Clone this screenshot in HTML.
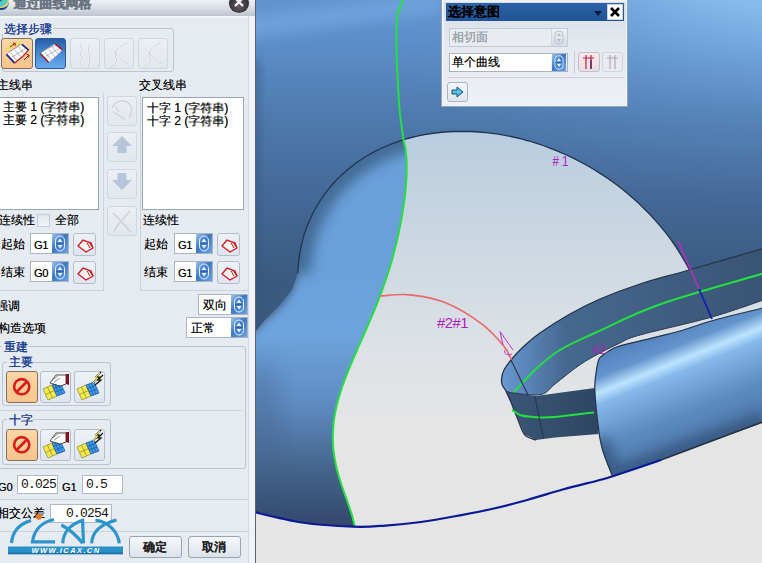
<!DOCTYPE html>
<html><head><meta charset="utf-8">
<style>
*{margin:0;padding:0;box-sizing:border-box}
html,body{width:762px;height:563px;overflow:hidden;background:#e2e4e6;font-family:"Liberation Sans",sans-serif;font-size:12px;color:#000}
#vp{position:absolute;left:0;top:0;width:762px;height:563px}
.a{position:absolute}
</style></head><body>
<svg id="vp" width="762" height="563" viewBox="0 0 762 563">
<defs>
<filter id="b4" x="-50%" y="-50%" width="200%" height="200%"><feGaussianBlur stdDeviation="4"/></filter>
<filter id="b6" x="-50%" y="-50%" width="200%" height="200%"><feGaussianBlur stdDeviation="6"/></filter>
<filter id="b12" x="-50%" y="-50%" width="200%" height="200%"><feGaussianBlur stdDeviation="12"/></filter>
<filter id="b20" x="-50%" y="-50%" width="200%" height="200%"><feGaussianBlur stdDeviation="20"/></filter>
<clipPath id="cTop"><path d="M255 -1 L765 -1 L765 248 L689 270 L689.5 270.0 L685.3 262.2 L680.8 254.6 L676.2 247.3 L671.3 240.2 L666.2 233.4 L660.9 226.9 L655.5 220.6 L650.0 214.5 L644.2 208.7 L638.4 203.1 L632.5 197.7 L626.4 192.5 L620.2 187.6 L613.9 182.8 L607.5 178.3 L600.9 173.9 L594.3 169.7 L587.5 165.8 L580.6 162.0 L573.7 158.4 L566.5 155.0 L559.3 151.8 L551.9 148.8 L544.4 146.0 L536.8 143.4 L529.1 141.0 L521.2 138.9 L513.1 137.0 L505.0 135.3 L496.6 133.9 L488.2 132.8 L479.6 132.0 L470.9 131.5 L462.1 131.3 L453.2 131.5 L444.2 132.0 L435.1 133.0 L426.0 134.4 L416.9 136.2 L407.7 138.5 L398.7 141.3 L389.7 144.7 L380.8 148.5 L372.2 152.9 L363.8 157.8 L355.7 163.3 L347.9 169.4 L340.5 175.9 L333.6 183.0 L327.2 190.6 L321.4 198.6 L316.2 207.0 L311.6 215.8 L307.6 224.9 L304.3 234.2 L301.7 243.7 L299.8 253.4 L298.5 263.1 L297.8 272.9 L292.0 290.0 L280.0 305.0 L265.0 320.0 L255.0 332.0 Z"/></clipPath>
<clipPath id="cLow"><path d="M255 332 L255.0 332.0 L265.0 320.0 L280.0 305.0 L292.0 290.0 L297.0 272.0 L297.8 272.9 L298.5 263.1 L299.8 253.4 L301.7 243.7 L304.3 234.2 L307.6 224.9 L311.6 215.8 L316.2 207.0 L321.4 198.6 L327.2 190.6 L333.6 183.0 L340.5 175.9 L347.9 169.4 L355.7 163.3 L363.8 157.8 L372.2 152.9 L380.8 148.5 L389.7 144.7 L398.7 141.3 L403.3 138.5 C403.7 140.2 404.9 145.1 405.4 148.5 C405.9 151.8 406.2 155.1 406.4 158.4 C406.7 161.7 406.7 165.1 406.7 168.4 C406.7 171.7 406.6 175.0 406.4 178.3 C406.2 181.7 406.0 185.0 405.7 188.3 C405.4 191.6 405.0 194.9 404.6 198.3 C404.2 201.6 403.7 204.9 403.2 208.2 C402.7 211.6 402.1 214.9 401.5 218.2 C400.9 221.5 400.3 224.8 399.6 228.2 C399.0 231.5 398.3 234.8 397.5 238.1 C396.8 241.4 396.0 244.8 395.1 248.1 C394.3 251.4 393.4 254.7 392.5 258.0 C391.6 261.4 390.6 264.7 389.6 268.0 C388.6 271.3 387.5 274.6 386.4 278.0 C385.3 281.3 384.1 284.6 382.9 287.9 C381.8 291.2 380.5 294.6 379.2 297.9 C378.0 301.2 376.6 304.5 375.3 307.8 C373.9 311.2 372.6 314.5 371.1 317.8 C369.7 321.1 368.3 324.4 366.8 327.8 C365.4 331.1 363.9 334.4 362.5 337.7 C361.0 341.1 359.5 344.4 358.0 347.7 C356.6 351.0 355.1 354.3 353.7 357.7 C352.3 361.0 350.8 364.3 349.5 367.6 C348.1 370.9 346.8 374.3 345.5 377.6 C344.3 380.9 343.1 384.2 341.9 387.5 C340.8 390.9 339.8 394.2 338.8 397.5 C337.9 400.8 337.0 404.1 336.2 407.5 C335.5 410.8 334.9 414.1 334.3 417.4 C333.8 420.7 333.4 424.1 333.2 427.4 C332.9 430.7 332.8 434.0 332.8 437.3 C332.8 440.7 332.9 444.0 333.2 447.3 C333.5 450.6 333.9 453.9 334.4 457.3 C335.0 460.6 335.6 463.9 336.4 467.2 C337.2 470.6 338.1 473.9 339.1 477.2 C340.1 480.5 341.2 483.8 342.3 487.2 C343.4 490.5 344.6 493.8 345.8 497.1 C347.0 500.4 348.2 503.8 349.3 507.1 C350.4 510.4 351.6 513.7 352.5 517.0 C353.4 520.4 354.3 525.3 354.7 527.0 L353.5 526.7 C344.9 526.0 318.9 525.1 301.7 522.5 C284.4 519.9 258.6 512.9 250.0 511.0 Z"/></clipPath>
<linearGradient id="gHole" x1="0" y1="130" x2="0" y2="430" gradientUnits="userSpaceOnUse">
<stop offset="0" stop-color="#b8cde0"/><stop offset="0.4" stop-color="#cdd8e2"/><stop offset="0.75" stop-color="#dee2e6"/><stop offset="1" stop-color="#e5e5e6"/>
</linearGradient>
<linearGradient id="gTop" x1="0" y1="0" x2="0" y2="280" gradientUnits="userSpaceOnUse">
<stop offset="0" stop-color="#6094ce"/><stop offset="0.15" stop-color="#5c8ec8"/><stop offset="0.45" stop-color="#4c78aa"/><stop offset="0.75" stop-color="#436694"/><stop offset="1" stop-color="#3a5a80"/>
</linearGradient>
<radialGradient id="gTR" cx="800" cy="-120" r="330" gradientTransform="translate(800 -120) scale(1.5 1) translate(-800 120)" gradientUnits="userSpaceOnUse">
<stop offset="0" stop-color="#b0dcff" stop-opacity="1"/><stop offset="0.4" stop-color="#8cc0f0" stop-opacity="0.85"/><stop offset="0.72" stop-color="#6a9ed6" stop-opacity="0.3"/><stop offset="1" stop-color="#5c8cc4" stop-opacity="0"/>
</radialGradient>
<linearGradient id="gLow" x1="0" y1="250" x2="0" y2="528" gradientUnits="userSpaceOnUse">
<stop offset="0" stop-color="#6a9fd8"/><stop offset="0.3" stop-color="#6ea4dc"/><stop offset="0.55" stop-color="#5e8cc2"/><stop offset="0.8" stop-color="#44628a"/><stop offset="1" stop-color="#33476a"/>
</linearGradient>
<linearGradient id="gRib" x1="500" y1="0" x2="762" y2="0" gradientUnits="userSpaceOnUse">
<stop offset="0" stop-color="#6a9ad0"/><stop offset="0.1" stop-color="#5a86ba"/><stop offset="0.25" stop-color="#46688f"/><stop offset="1" stop-color="#3a5474"/>
</linearGradient>
<linearGradient id="gFront" x1="511" y1="0" x2="597" y2="0" gradientUnits="userSpaceOnUse">
<stop offset="0" stop-color="#3a5676"/><stop offset="1" stop-color="#2e4662"/>
</linearGradient>
<linearGradient id="gShape" x1="665" y1="323" x2="721" y2="463" gradientUnits="userSpaceOnUse">
<stop offset="0" stop-color="#4e7eb8"/><stop offset="0.17" stop-color="#6494cc"/><stop offset="0.267" stop-color="#bce4ff"/><stop offset="0.34" stop-color="#86b8ea"/><stop offset="0.6" stop-color="#5c8cc0"/><stop offset="1" stop-color="#42689a"/>
</linearGradient>
</defs>
<rect x="255" y="0" width="507" height="563" fill="url(#gHole)"/>
<path d="M255 332 L255.0 332.0 L265.0 320.0 L280.0 305.0 L292.0 290.0 L297.0 272.0 L297.8 272.9 L298.5 263.1 L299.8 253.4 L301.7 243.7 L304.3 234.2 L307.6 224.9 L311.6 215.8 L316.2 207.0 L321.4 198.6 L327.2 190.6 L333.6 183.0 L340.5 175.9 L347.9 169.4 L355.7 163.3 L363.8 157.8 L372.2 152.9 L380.8 148.5 L389.7 144.7 L398.7 141.3 L403.3 138.5 C403.7 140.2 404.9 145.1 405.4 148.5 C405.9 151.8 406.2 155.1 406.4 158.4 C406.7 161.7 406.7 165.1 406.7 168.4 C406.7 171.7 406.6 175.0 406.4 178.3 C406.2 181.7 406.0 185.0 405.7 188.3 C405.4 191.6 405.0 194.9 404.6 198.3 C404.2 201.6 403.7 204.9 403.2 208.2 C402.7 211.6 402.1 214.9 401.5 218.2 C400.9 221.5 400.3 224.8 399.6 228.2 C399.0 231.5 398.3 234.8 397.5 238.1 C396.8 241.4 396.0 244.8 395.1 248.1 C394.3 251.4 393.4 254.7 392.5 258.0 C391.6 261.4 390.6 264.7 389.6 268.0 C388.6 271.3 387.5 274.6 386.4 278.0 C385.3 281.3 384.1 284.6 382.9 287.9 C381.8 291.2 380.5 294.6 379.2 297.9 C378.0 301.2 376.6 304.5 375.3 307.8 C373.9 311.2 372.6 314.5 371.1 317.8 C369.7 321.1 368.3 324.4 366.8 327.8 C365.4 331.1 363.9 334.4 362.5 337.7 C361.0 341.1 359.5 344.4 358.0 347.7 C356.6 351.0 355.1 354.3 353.7 357.7 C352.3 361.0 350.8 364.3 349.5 367.6 C348.1 370.9 346.8 374.3 345.5 377.6 C344.3 380.9 343.1 384.2 341.9 387.5 C340.8 390.9 339.8 394.2 338.8 397.5 C337.9 400.8 337.0 404.1 336.2 407.5 C335.5 410.8 334.9 414.1 334.3 417.4 C333.8 420.7 333.4 424.1 333.2 427.4 C332.9 430.7 332.8 434.0 332.8 437.3 C332.8 440.7 332.9 444.0 333.2 447.3 C333.5 450.6 333.9 453.9 334.4 457.3 C335.0 460.6 335.6 463.9 336.4 467.2 C337.2 470.6 338.1 473.9 339.1 477.2 C340.1 480.5 341.2 483.8 342.3 487.2 C343.4 490.5 344.6 493.8 345.8 497.1 C347.0 500.4 348.2 503.8 349.3 507.1 C350.4 510.4 351.6 513.7 352.5 517.0 C353.4 520.4 354.3 525.3 354.7 527.0 L353.5 526.7 C344.9 526.0 318.9 525.1 301.7 522.5 C284.4 519.9 258.6 512.9 250.0 511.0 Z" fill="url(#gLow)"/>
<g clip-path="url(#cLow)">
<path d="M297.8 272.9 L298.5 263.1 L299.8 253.4 L301.7 243.7 L304.3 234.2 L307.6 224.9 L311.6 215.8 L316.2 207.0 L321.4 198.6 L327.2 190.6 L333.6 183.0 L340.5 175.9 L347.9 169.4 L355.7 163.3 L363.8 157.8 L372.2 152.9 L380.8 148.5 L389.7 144.7 L398.7 141.3 L407.7 138.5 L416.9 136.2 L426.0 134.4 L435.1 133.0 L444.2 132.0 L453.2 131.5 L462.1 131.3 L470.9 131.5 L479.6 132.0 L488.2 132.8 L496.6 133.9 L505.0 135.3 L513.1 137.0 L521.2 138.9 L529.1 141.0 L536.8 143.4 L544.4 146.0 L551.9 148.8 L559.3 151.8 L566.5 155.0 L573.7 158.4 L580.6 162.0 L587.5 165.8 L594.3 169.7 L600.9 173.9 L607.5 178.3 L613.9 182.8 L620.2 187.6 L626.4 192.5 L632.5 197.7 L638.4 203.1 L644.2 208.7 L650.0 214.5 L655.5 220.6 L660.9 226.9 L666.2 233.4 L671.3 240.2 L676.2 247.3 L680.8 254.6 L685.3 262.2 L689.5 270.0" fill="none" stroke="#36587f" stroke-width="26" opacity="0.7" filter="url(#b6)"/>
<ellipse cx="262" cy="420" rx="16" ry="60" fill="#44648c" opacity="0.45" filter="url(#b12)"/>
</g>
<path d="M250 140 L297 272 C296 292 282 306 268 318 C262 323 256 330 250 336 Z" fill="#3c5c84" filter="url(#b4)"/>
<path d="M255 -1 L765 -1 L765 248 L689 270 L689.5 270.0 L685.3 262.2 L680.8 254.6 L676.2 247.3 L671.3 240.2 L666.2 233.4 L660.9 226.9 L655.5 220.6 L650.0 214.5 L644.2 208.7 L638.4 203.1 L632.5 197.7 L626.4 192.5 L620.2 187.6 L613.9 182.8 L607.5 178.3 L600.9 173.9 L594.3 169.7 L587.5 165.8 L580.6 162.0 L573.7 158.4 L566.5 155.0 L559.3 151.8 L551.9 148.8 L544.4 146.0 L536.8 143.4 L529.1 141.0 L521.2 138.9 L513.1 137.0 L505.0 135.3 L496.6 133.9 L488.2 132.8 L479.6 132.0 L470.9 131.5 L462.1 131.3 L453.2 131.5 L444.2 132.0 L435.1 133.0 L426.0 134.4 L416.9 136.2 L407.7 138.5 L398.7 141.3 L389.7 144.7 L380.8 148.5 L372.2 152.9 L363.8 157.8 L355.7 163.3 L347.9 169.4 L340.5 175.9 L333.6 183.0 L327.2 190.6 L321.4 198.6 L316.2 207.0 L311.6 215.8 L307.6 224.9 L304.3 234.2 L301.7 243.7 L299.8 253.4 L298.5 263.1 L297.8 272.9 L292.0 290.0 L280.0 305.0 L265.0 320.0 L255.0 332.0 Z" fill="url(#gTop)"/>
<g clip-path="url(#cTop)">
<path d="M255 -1 L765 -1 L765 248 L689 270 L689.5 270.0 L685.3 262.2 L680.8 254.6 L676.2 247.3 L671.3 240.2 L666.2 233.4 L660.9 226.9 L655.5 220.6 L650.0 214.5 L644.2 208.7 L638.4 203.1 L632.5 197.7 L626.4 192.5 L620.2 187.6 L613.9 182.8 L607.5 178.3 L600.9 173.9 L594.3 169.7 L587.5 165.8 L580.6 162.0 L573.7 158.4 L566.5 155.0 L559.3 151.8 L551.9 148.8 L544.4 146.0 L536.8 143.4 L529.1 141.0 L521.2 138.9 L513.1 137.0 L505.0 135.3 L496.6 133.9 L488.2 132.8 L479.6 132.0 L470.9 131.5 L462.1 131.3 L453.2 131.5 L444.2 132.0 L435.1 133.0 L426.0 134.4 L416.9 136.2 L407.7 138.5 L398.7 141.3 L389.7 144.7 L380.8 148.5 L372.2 152.9 L363.8 157.8 L355.7 163.3 L347.9 169.4 L340.5 175.9 L333.6 183.0 L327.2 190.6 L321.4 198.6 L316.2 207.0 L311.6 215.8 L307.6 224.9 L304.3 234.2 L301.7 243.7 L299.8 253.4 L298.5 263.1 L297.8 272.9 L292.0 290.0 L280.0 305.0 L265.0 320.0 L255.0 332.0 Z" fill="url(#gTR)"/>
<path d="M240 16 L440 -8 L440 14 L240 40 Z" fill="#72a6de" opacity="0.75" filter="url(#b6)"/>
<rect x="250" y="60" width="10" height="300" fill="#34527a" opacity="0.45" filter="url(#b4)"/>
</g>
<!-- ribbon -->
<path d="M765 248 L765.0 248.0 C752.3 251.7 709.8 264.0 689.0 270.0 C668.2 276.0 654.8 279.2 640.0 284.0 C625.2 288.8 611.7 294.0 600.0 299.0 C588.3 304.0 580.0 308.3 570.0 314.0 C560.0 319.7 548.0 327.3 540.0 333.0 C532.0 338.7 526.8 343.5 522.0 348.0 C517.2 352.5 514.0 356.3 511.0 360.0 C508.0 363.7 505.6 366.9 504.0 370.0 C502.4 373.1 501.9 376.2 501.6 378.7 C501.3 381.2 501.5 382.8 502.2 384.9 C502.9 386.9 505.4 390.0 506.0 391.0 L506.0 391.0 C507.2 391.3 507.7 392.4 513.5 393.0 C519.3 393.6 534.1 396.0 541.0 394.5 C547.9 393.0 548.7 388.9 555.0 384.0 C561.3 379.1 571.7 370.4 579.0 365.4 C586.3 360.3 591.9 357.4 598.7 353.7 C605.5 350.0 613.1 346.1 620.0 343.0 C626.9 339.9 624.7 339.3 640.0 335.0 C655.3 330.7 691.2 322.9 712.0 317.0 C732.8 311.1 756.2 302.4 765.0 299.5 Z" fill="url(#gRib)"/>
<path d="M506 391 L506.0 391.0 L511.0 392.4 L536.0 396.0 L594.8 388.0 L598.7 434.0 L555.0 437.5 L536.0 440.0 L524.6 434.6 L517.0 417.2 L511.0 402.3 Z" fill="url(#gFront)"/>
<!-- blue shape -->
<path d="M765 307.5 L765.0 307.5 C756.3 309.7 727.2 316.6 713.0 320.5 C698.8 324.4 689.2 328.3 680.0 331.0 C670.8 333.7 668.0 334.1 658.0 336.6 C648.0 339.1 628.2 343.5 620.0 345.9 C611.8 348.3 611.8 349.5 609.0 351.0 C606.2 352.5 604.7 353.7 603.0 355.0 C601.3 356.3 600.0 356.9 599.0 359.0 C598.0 361.1 597.2 366.0 596.8 367.4 L596.8 367.4 C596.5 371.0 594.5 378.6 594.8 389.0 C595.1 399.4 597.4 419.8 598.7 430.0 C600.0 440.2 600.3 442.2 602.6 450.0 C604.9 457.8 611.0 472.3 612.7 476.8 L612.7 476.3 C623.9 472.4 654.6 461.8 680.0 452.7 C705.4 443.6 750.8 427.1 765.0 422.0 Z" fill="url(#gShape)"/>
<clipPath id="cShape"><path d="M765 307.5 L765.0 307.5 C756.3 309.7 727.2 316.6 713.0 320.5 C698.8 324.4 689.2 328.3 680.0 331.0 C670.8 333.7 668.0 334.1 658.0 336.6 C648.0 339.1 628.2 343.5 620.0 345.9 C611.8 348.3 611.8 349.5 609.0 351.0 C606.2 352.5 604.7 353.7 603.0 355.0 C601.3 356.3 600.0 356.9 599.0 359.0 C598.0 361.1 597.2 366.0 596.8 367.4 L596.8 367.4 C596.5 371.0 594.5 378.6 594.8 389.0 C595.1 399.4 597.4 419.8 598.7 430.0 C600.0 440.2 600.3 442.2 602.6 450.0 C604.9 457.8 611.0 472.3 612.7 476.8 L612.7 476.3 C623.9 472.4 654.6 461.8 680.0 452.7 C705.4 443.6 750.8 427.1 765.0 422.0 Z"/></clipPath>
<g clip-path="url(#cShape)"><path d="M598 440 L613 478 L765 422" fill="none" stroke="#2a4468" stroke-width="22" opacity="0.55" filter="url(#b6)"/></g>
<!-- lines -->
<path d="M297.8 272.9 L298.5 263.1 L299.8 253.4 L301.7 243.7 L304.3 234.2 L307.6 224.9 L311.6 215.8 L316.2 207.0 L321.4 198.6 L327.2 190.6 L333.6 183.0 L340.5 175.9 L347.9 169.4 L355.7 163.3 L363.8 157.8 L372.2 152.9 L380.8 148.5 L389.7 144.7 L398.7 141.3 L407.7 138.5 L416.9 136.2 L426.0 134.4 L435.1 133.0 L444.2 132.0 L453.2 131.5 L462.1 131.3 L470.9 131.5 L479.6 132.0 L488.2 132.8 L496.6 133.9 L505.0 135.3 L513.1 137.0 L521.2 138.9 L529.1 141.0 L536.8 143.4 L544.4 146.0 L551.9 148.8 L559.3 151.8 L566.5 155.0 L573.7 158.4 L580.6 162.0 L587.5 165.8 L594.3 169.7 L600.9 173.9 L607.5 178.3 L613.9 182.8 L620.2 187.6 L626.4 192.5 L632.5 197.7 L638.4 203.1 L644.2 208.7 L650.0 214.5 L655.5 220.6 L660.9 226.9 L666.2 233.4 L671.3 240.2 L676.2 247.3 L680.8 254.6 L685.3 262.2 L689.5 270.0" fill="none" stroke="#22344c" stroke-width="1.3"/>
<path d="M765 248 L765.0 248.0 C752.3 251.7 709.8 264.0 689.0 270.0 C668.2 276.0 654.8 279.2 640.0 284.0 C625.2 288.8 611.7 294.0 600.0 299.0 C588.3 304.0 580.0 308.3 570.0 314.0 C560.0 319.7 548.0 327.3 540.0 333.0 C532.0 338.7 526.8 343.5 522.0 348.0 C517.2 352.5 514.0 356.3 511.0 360.0 C508.0 363.7 505.6 366.9 504.0 370.0 C502.4 373.1 501.9 376.2 501.6 378.7 C501.3 381.2 501.5 382.8 502.2 384.9 C502.9 386.9 505.4 390.0 506.0 391.0 L506.0 391.0 C506.8 392.9 509.2 397.9 511.0 402.3 C512.8 406.7 514.7 411.8 517.0 417.2 C519.3 422.6 521.4 430.8 524.6 434.6 C527.8 438.4 534.1 439.1 536.0 440.0" fill="none" stroke="#24344a" stroke-width="1.3"/>
<path d="M513.5 392.7 C517.3 388.7 528.6 375.7 536.4 368.6 C544.1 361.5 549.9 356.1 560.0 350.0 C570.1 343.9 580.2 339.7 597.0 332.0 C613.8 324.3 633.0 313.8 661.0 304.0 C689.0 294.2 747.7 278.2 765.0 273.0" fill="none" stroke="#22e040" stroke-width="2"/>
<path d="M512.0 409.8 C513.5 410.7 516.8 414.1 520.8 415.3 C524.8 416.5 530.3 416.9 536.0 417.2 C541.7 417.5 545.3 417.8 555.0 417.0 C564.7 416.2 587.5 413.2 594.0 412.4" fill="none" stroke="#22e040" stroke-width="2"/>
<path d="M506.0 391.0 C507.2 391.3 507.7 392.4 513.5 393.0 C519.3 393.6 534.1 396.0 541.0 394.5 C547.9 393.0 548.7 388.9 555.0 384.0 C561.3 379.1 571.7 370.4 579.0 365.4 C586.3 360.3 591.9 357.4 598.7 353.7 C605.5 350.0 613.1 346.1 620.0 343.0 C626.9 339.9 624.7 339.3 640.0 335.0 C655.3 330.7 691.2 322.9 712.0 317.0 C732.8 311.1 756.2 302.4 765.0 299.5" fill="none" stroke="#2a3a50" stroke-width="1"/>
<path d="M765 307.5 L765.0 307.5 C756.3 309.7 727.2 316.6 713.0 320.5 C698.8 324.4 689.2 328.3 680.0 331.0 C670.8 333.7 668.0 334.1 658.0 336.6 C648.0 339.1 628.2 343.5 620.0 345.9 C611.8 348.3 611.8 349.5 609.0 351.0 C606.2 352.5 604.7 353.7 603.0 355.0 C601.3 356.3 600.0 356.9 599.0 359.0 C598.0 361.1 597.2 366.0 596.8 367.4 L596.8 367.4 C596.5 371.0 594.5 378.6 594.8 389.0 C595.1 399.4 597.4 419.8 598.7 430.0 C600.0 440.2 600.3 442.2 602.6 450.0 C604.9 457.8 611.0 472.3 612.7 476.8" fill="none" stroke="#24344a" stroke-width="1.2"/>
<path d="M404.0 -3.0 C403.0 -0.3 399.2 8.0 398.0 13.0 C396.8 18.0 396.8 20.3 396.6 27.0 C396.4 33.7 396.4 43.3 396.6 53.0 C396.8 62.7 397.5 75.2 398.0 85.0 C398.5 94.8 398.9 103.1 399.8 112.0 C400.7 120.9 402.4 132.4 403.3 138.5 C404.2 144.6 404.9 145.1 405.4 148.5 C405.9 151.8 406.2 155.1 406.4 158.4 C406.7 161.7 406.7 165.1 406.7 168.4 C406.7 171.7 406.6 175.0 406.4 178.3 C406.2 181.7 406.0 185.0 405.7 188.3 C405.4 191.6 405.0 194.9 404.6 198.3 C404.2 201.6 403.7 204.9 403.2 208.2 C402.7 211.6 402.1 214.9 401.5 218.2 C400.9 221.5 400.3 224.8 399.6 228.2 C399.0 231.5 398.3 234.8 397.5 238.1 C396.8 241.4 396.0 244.8 395.1 248.1 C394.3 251.4 393.4 254.7 392.5 258.0 C391.6 261.4 390.6 264.7 389.6 268.0 C388.6 271.3 387.5 274.6 386.4 278.0 C385.3 281.3 384.1 284.6 382.9 287.9 C381.8 291.2 380.5 294.6 379.2 297.9 C378.0 301.2 376.6 304.5 375.3 307.8 C373.9 311.2 372.6 314.5 371.1 317.8 C369.7 321.1 368.3 324.4 366.8 327.8 C365.4 331.1 363.9 334.4 362.5 337.7 C361.0 341.1 359.5 344.4 358.0 347.7 C356.6 351.0 355.1 354.3 353.7 357.7 C352.3 361.0 350.8 364.3 349.5 367.6 C348.1 370.9 346.8 374.3 345.5 377.6 C344.3 380.9 343.1 384.2 341.9 387.5 C340.8 390.9 339.8 394.2 338.8 397.5 C337.9 400.8 337.0 404.1 336.2 407.5 C335.5 410.8 334.9 414.1 334.3 417.4 C333.8 420.7 333.4 424.1 333.2 427.4 C332.9 430.7 332.8 434.0 332.8 437.3 C332.8 440.7 332.9 444.0 333.2 447.3 C333.5 450.6 333.9 453.9 334.4 457.3 C335.0 460.6 335.6 463.9 336.4 467.2 C337.2 470.6 338.1 473.9 339.1 477.2 C340.1 480.5 341.2 483.8 342.3 487.2 C343.4 490.5 344.6 493.8 345.8 497.1 C347.0 500.4 348.2 503.8 349.3 507.1 C350.4 510.4 351.6 513.7 352.5 517.0 C353.4 520.4 354.3 525.3 354.7 527.0" fill="none" stroke="#22e040" stroke-width="2"/>
<path d="M661 460 L765 421" fill="none" stroke="#283244" stroke-width="1.6"/>
<path d="M250.0 511.0 C258.6 512.9 284.4 519.9 301.7 522.5 C318.9 525.1 339.6 526.2 353.5 526.7 C367.4 527.2 374.2 526.4 385.4 525.6 C396.6 524.8 409.1 523.6 420.9 522.0 C432.7 520.4 444.5 518.2 456.3 516.0 C468.1 513.8 479.9 511.7 491.7 509.0 C503.5 506.3 515.4 503.2 527.2 500.0 C539.0 496.8 550.8 492.8 562.6 489.5 C574.4 486.2 589.6 482.7 598.0 480.5 C606.4 478.3 602.2 479.7 612.7 476.3 C623.2 472.9 653.0 462.7 661.0 460.0" fill="none" stroke="#0a1a96" stroke-width="2.2"/>

<path d="M380.0 296.0 C385.0 295.8 399.2 293.7 410.0 294.8 C420.8 295.9 433.1 297.7 445.0 302.5 C456.9 307.3 471.6 316.4 481.4 323.6 C491.2 330.9 498.7 339.9 503.7 346.0 C508.7 352.1 510.3 357.7 511.6 360.0" fill="none" stroke="#e86a6a" stroke-width="1.7"/>
<path d="M511 360 L528 395" stroke="#24344a" stroke-width="1.1"/>
<path d="M534.8 395.6 L543.4 439" stroke="#24344a" stroke-width="1"/>
<path d="M678 241 L699 289" stroke="#b030c0" stroke-width="1.6"/>
<path d="M699 289 L712 319" stroke="#1020b0" stroke-width="1.8"/>
<path d="M500 331.5 L503 345 M500 331.5 L513 350 M505 350 C503 354 508 356 512 354" fill="none" stroke="#c030d0" stroke-width="1"/>
<text x="437" y="327.5" font-family="Liberation Sans" font-size="14" fill="#b020c0" letter-spacing="-0.5" textLength="31" lengthAdjust="spacingAndGlyphs">#2#1</text>
<text x="552.5" y="166" font-family="Liberation Sans" font-size="14" fill="#b020c0" textLength="16" lengthAdjust="spacingAndGlyphs"># 1</text>
<text x="592" y="354" font-family="Liberation Sans" font-size="13" fill="#b020c0">#2</text>

</svg>
<style>
#dlg{position:absolute;left:0;top:0;width:256px;height:563px;background:#e6eaf1;overflow:hidden}
.t{position:absolute;white-space:nowrap;font-size:12px;line-height:12px;color:#000;text-shadow:0.25px 0 0 rgba(0,0,0,0.6)}
.grp{position:absolute;border:1px solid #bcc4ce;border-radius:3px}
.lst{position:absolute;background:#fff;border:1px solid #99a5b3}
.cmb{position:absolute;background:#fff;border:1px solid #a9b4c0}
.btn{position:absolute;border:1px solid #b4bfcc;border-radius:3px;background:linear-gradient(#eef2f7,#dfe5ee)}
.dis{position:absolute;border:1px solid #d0d7e0;border-radius:3px;background:linear-gradient(#eceff4,#e2e7ee)}
.inp{position:absolute;background:#fff;border:1px solid #b0bac6;font-family:"Liberation Mono",monospace;font-size:13px;line-height:17px;color:#111;letter-spacing:-0.8px}
.sep{position:absolute;height:1px;background:#ccd3dc}
.vsep{position:absolute;width:1px;background:#ccd3dc}
.bl{color:#1a3e92 !important;text-shadow:0.3px 0 0 #1a3e92}
.org{position:absolute;border:1px solid #857060;border-radius:3px;background:linear-gradient(#fcd6a6,#f8c48c)}
</style>
<svg width="0" height="0" style="position:absolute">
<defs>
<linearGradient id="spg" x1="0" y1="0" x2="1" y2="1"><stop offset="0" stop-color="#9cc4ee"/><stop offset="0.45" stop-color="#3c78c4"/><stop offset="1" stop-color="#6aa4e4"/></linearGradient>
<symbol id="spin" viewBox="0 0 16 19">
<rect x="0" y="0" width="16" height="19" fill="url(#spg)"/>
<rect x="3.5" y="2" width="9" height="15" rx="4.5" fill="none" stroke="#e8f2ff" stroke-width="1"/>
<path d="M5.5 8 L8 4.5 L10.5 8 Z M5.5 11 L8 14.5 L10.5 11 Z" fill="#e8f2ff"/>
<path d="M4 9.5 H12" stroke="#2a5ea8" stroke-width="0.8"/>
</symbol>
<symbol id="redic" viewBox="0 0 22 22">
<path d="M4 12 L9 6 L17 9 L19 14 L12 18 Z" fill="#fff6f6" stroke="#d01a24" stroke-width="1.4"/>
<path d="M15 8 L18 13 M13 9 L16 14" stroke="#d01a24" stroke-width="1"/>
</symbol>
<symbol id="grid" viewBox="0 0 30 30">
<path d="M3 18 L12 14 L17 25 L8 29 Z" fill="#f4e84c" stroke="#8a8a20" stroke-width="0.7"/>
<path d="M7.5 16 L12.5 27 M5.5 23.5 L14.5 19.5" stroke="#8a8a20" stroke-width="0.7"/>
<path d="M12 14 L20 11 L25 22 L17 25 Z" fill="#3c9ee8" stroke="#1a4a9a" stroke-width="0.7"/>
<path d="M14.7 13 L19.7 24 M17.3 12 L22.3 23 M13.5 17.5 L21.5 14.5 M15 21 L23 18" stroke="#1a4a9a" stroke-width="0.6"/>
</symbol>
</defs>
</svg>
<div id="dlg">
<!-- title bar -->
<div class="a" style="left:0;top:0;width:256px;height:16px;background:linear-gradient(#eef1f5,#d8dee6 50%,#bcc4ce)"></div>
<div class="a" style="left:0;top:16px;width:256px;height:2px;background:#f2f5f9"></div>
<div class="a" style="left:-6px;top:-6px;width:15px;height:16px;border-radius:50%;background:radial-gradient(circle at 35% 30%,#503860 18%,#40d4d4 30%,#58c8b8 55%,#e6d470 72%,#eee8b0 88%);border-bottom:2px solid #1a3a90"></div>
<div class="t" style="left:13px;top:-3px;font-size:13px;line-height:13px;font-weight:bold;color:#6a7480;text-shadow:0.5px 0 0 #6a7480,0 0 2px #f4f6fa">通过曲线网格</div>
<div class="a" style="left:229px;top:-6px;width:20px;height:19px;border-radius:50%;background:radial-gradient(circle at 50% 60%,#6a6268,#2c282e 75%);box-shadow:0 0 0 1px #d8dde4"></div>
<svg class="a" style="left:229px;top:-6px" width="20" height="19"><path d="M6 4 L14 12 M14 4 L6 12" stroke="#fff" stroke-width="2.2"/></svg>
<!-- right border -->
<div class="a" style="left:248px;top:16px;width:7px;height:547px;background:#eef2f7;border-left:1px solid #d0d8e2"></div>
<div class="a" style="left:255px;top:0;width:1px;height:563px;background:#5a626c"></div>

<!-- select steps group -->
<div class="grp" style="left:2px;top:28px;width:172px;height:44px"></div>
<div class="a" style="left:2px;top:22px;width:51px;height:12px;background:#e6eaf1"></div>
<div class="t bl" style="left:4px;top:23px">选择步骤</div>
<div class="org" style="left:1px;top:38px;width:32px;height:31px"></div>
<div class="a" style="left:35px;top:38px;width:31px;height:31px;border:1px solid #2a5a96;border-radius:3px;background:linear-gradient(#2a5ca8,#4a8ed8 55%,#6aaaea)"></div>
<div class="dis" style="left:70px;top:38px;width:30px;height:31px"></div>
<div class="dis" style="left:104px;top:38px;width:30px;height:31px"></div>
<div class="dis" style="left:138px;top:38px;width:30px;height:31px"></div>
<svg class="a" style="left:0;top:36px" width="170" height="36" viewBox="0 36 170 36">
 <path d="M6.5 54.4 C10 51 16 48 22 44.3 L28.5 50.2 C24 56 19 60 14.7 63.1 Z" fill="#fff" stroke="#707898" stroke-width="0.5"/>
 <path d="M9 52 C12 50 17 47 20 44 M12 57 C16 55 22 51 26 48 M11 53 L17.5 61 M15 50 L21.5 58 M19 47 L25 55" stroke="#6a6a80" stroke-width="0.5" fill="none"/>
 <path d="M6 50 C10 47 16 44 21 42" stroke="#f0e040" stroke-width="2.5" fill="none" opacity="0.8"/>
 <path d="M6.5 54.4 L14.7 63.1" stroke="#1a2a8a" stroke-width="1.8"/>
 <path d="M22 44.3 L28.5 50.2" stroke="#1a2a8a" stroke-width="1.8"/>
 <path d="M28.5 50.2 C24 56 19 60 14.7 63.1" stroke="#c01818" stroke-width="1.2" fill="none"/>
 <path d="M10 47 L15 43.5 M13 43 L15.5 43.5 L15 46 M24 60 L29 55 M26.5 54.5 L29 55 L28.5 57.5" stroke="#b01818" stroke-width="1" fill="none"/>
 <path d="M40.4 53.5 C44 50 50 47 55.1 43.8 L62.5 49.8 C58 55 53 59 48.7 62.6 Z" fill="#fff" stroke="#8a90a8" stroke-width="0.5"/>
 <path d="M43 51 C47 49 52 46 57 45.5 M46 56 C50 54 55 51 60 48 M45 52 L51.5 60 M49 49.5 L55 57 M52.5 47 L58.5 54.5" stroke="#707088" stroke-width="0.5" fill="none"/>
 <path d="M40.4 53.5 L48.7 62.6 M55.1 43.8 L62.5 49.8" stroke="#a01828" stroke-width="1.5"/>
 <g fill="none" stroke="#fff" stroke-width="1.6" opacity="0.9">
 <path d="M82 43 C78 46 84 49 81 52 C78 55 84 58 81 61 C78 64 83 67 81 68 M90 44 C86 50 92 56 88 67"/>
 <path d="M127 43 C118 46 113 53 116 58 C118 62 114 66 110 67 M111 49 C116 52 120 60 128 64"/>
 <path d="M161 43 C152 46 147 53 150 58 C152 62 148 66 144 67 M145 49 C150 52 154 60 162 64"/>
 </g>
 <g fill="none" stroke="#b8bec8" stroke-width="0.8">
 <path d="M82 43 C78 46 84 49 81 52 C78 55 84 58 81 61 C78 64 83 67 81 68 M90 44 C86 50 92 56 88 67"/>
 <path d="M127 43 C118 46 113 53 116 58 C118 62 114 66 110 67 M111 49 C116 52 120 60 128 64"/>
 <path d="M161 43 C152 46 147 53 150 58 C152 62 148 66 144 67 M145 49 C150 52 154 60 162 64"/>
 </g>
</svg>

<!-- labels -->
<div class="t" style="left:-3px;top:79px">主线串</div>
<div class="t" style="left:139px;top:79px">交叉线串</div>
<!-- left list -->
<div class="lst" style="left:-2px;top:97px;width:101px;height:113px"></div>
<div class="t" style="left:3px;top:101px;line-height:13px">主要 1 (字符串)<br>主要 2 (字符串)</div>
<!-- right list -->
<div class="lst" style="left:142px;top:97px;width:102px;height:113px"></div>
<div class="t" style="left:147px;top:102px;line-height:13px">十字 1 (字符串)<br>十字 2 (字符串)</div>
<!-- vertical separators -->
<div class="vsep" style="left:103px;top:93px;height:198px"></div>
<div class="vsep" style="left:140px;top:93px;height:198px"></div>
<div class="sep" style="left:0;top:290px;width:104px"></div>
<div class="sep" style="left:140px;top:290px;width:108px"></div>
<!-- middle buttons -->
<div class="dis" style="left:107px;top:96px;width:30px;height:30px"></div>
<div class="dis" style="left:107px;top:132px;width:30px;height:30px"></div>
<div class="dis" style="left:107px;top:169px;width:30px;height:30px"></div>
<div class="dis" style="left:107px;top:206px;width:30px;height:30px"></div>
<svg class="a" style="left:107px;top:96px" width="30" height="141" viewBox="0 0 30 141">
 <path d="M5 12 C7 6 14 3 20 6 C25 9 26 16 22 22 M8 10 L12 16 M6 16 C10 18 14 20 18 24" fill="none" stroke="#cdd2da" stroke-width="1.2"/>
 <path d="M15 40 L5 50 L10.5 50 L10.5 57 L19.5 57 L19.5 50 L25 50 Z" fill="#b6c6da"/>
 <path d="M15 94 L5 84 L10.5 84 L10.5 77 L19.5 77 L19.5 84 L25 84 Z" fill="#b6c6da"/>
 <path d="M6 117 C12 122 18 130 24 136 M23 115 C17 122 11 128 7 135" fill="none" stroke="#cdd2da" stroke-width="1.6"/>
</svg>

<!-- continuity left -->
<div class="t" style="left:-1px;top:214px">连续性</div>
<div class="a" style="left:37px;top:214px;width:13px;height:13px;border:1px solid #c4ccd6;background:linear-gradient(#e2e7ee,#f2f5f8)"></div>
<div class="t" style="left:55px;top:214px">全部</div>
<div class="t" style="left:1px;top:238px">起始</div>
<div class="t" style="left:1px;top:266px">结束</div>
<div class="cmb" style="left:30px;top:233px;width:39px;height:21px"></div>
<div class="cmb" style="left:30px;top:261px;width:39px;height:21px"></div>
<div class="t" style="left:34px;top:239px;font-size:11px;letter-spacing:-0.2px">G1</div>
<div class="t" style="left:34px;top:267px;font-size:11px;letter-spacing:-0.2px">G0</div>
<div class="btn" style="left:73px;top:233px;width:23px;height:23px"></div>
<div class="btn" style="left:73px;top:261px;width:23px;height:23px"></div>
<!-- continuity right -->
<div class="t" style="left:143px;top:214px">连续性</div>
<div class="t" style="left:144px;top:238px">起始</div>
<div class="t" style="left:144px;top:266px">结束</div>
<div class="cmb" style="left:174px;top:233px;width:39px;height:21px"></div>
<div class="cmb" style="left:174px;top:261px;width:39px;height:21px"></div>
<div class="t" style="left:178px;top:239px;font-size:11px;letter-spacing:-0.2px">G1</div>
<div class="t" style="left:178px;top:267px;font-size:11px;letter-spacing:-0.2px">G1</div>
<div class="btn" style="left:217px;top:233px;width:23px;height:23px"></div>
<div class="btn" style="left:217px;top:261px;width:23px;height:23px"></div>
<svg class="a" style="left:0;top:0" width="256" height="340">
 <use href="#spin" x="52" y="234" width="16" height="19"/>
 <use href="#spin" x="52" y="262" width="16" height="19"/>
 <use href="#spin" x="196" y="234" width="16" height="19"/>
 <use href="#spin" x="196" y="262" width="16" height="19"/>
 <use href="#redic" x="74" y="234" width="22" height="22"/>
 <use href="#redic" x="74" y="262" width="22" height="22"/>
 <use href="#redic" x="218" y="234" width="22" height="22"/>
 <use href="#redic" x="218" y="262" width="22" height="22"/>
</svg>

<!-- emphasis / build options -->
<div class="t" style="left:-4px;top:300px">强调</div>
<div class="t" style="left:-2px;top:322px">构造选项</div>
<div class="cmb" style="left:198px;top:294px;width:50px;height:21px"></div>
<div class="t" style="left:203px;top:299px">双向</div>
<div class="cmb" style="left:186px;top:317px;width:62px;height:21px"></div>
<div class="t" style="left:191px;top:322px">正常</div>
<svg class="a" style="left:0;top:0" width="256" height="340">
 <use href="#spin" x="231" y="295" width="16" height="19"/>
 <use href="#spin" x="231" y="318" width="16" height="19"/>
</svg>

<!-- rebuild group -->
<div class="grp" style="left:-3px;top:346px;width:249px;height:123px"></div>
<div class="a" style="left:2px;top:340px;width:26px;height:12px;background:#e6eaf1"></div>
<div class="t bl" style="left:4px;top:341px">重建</div>
<div class="grp" style="left:2px;top:362px;width:109px;height:44px"></div>
<div class="a" style="left:7px;top:356px;width:26px;height:12px;background:#e6eaf1"></div>
<div class="t bl" style="left:9px;top:356px">主要</div>
<div class="sep" style="left:0;top:410px;width:242px"></div>
<div class="grp" style="left:2px;top:419px;width:109px;height:46px"></div>
<div class="a" style="left:7px;top:413px;width:26px;height:12px;background:#e6eaf1"></div>
<div class="t bl" style="left:9px;top:414px">十字</div>
<div class="org" style="left:6px;top:371px;width:32px;height:32px"></div>
<div class="btn" style="left:40px;top:371px;width:31px;height:32px"></div>
<div class="btn" style="left:74px;top:371px;width:31px;height:32px"></div>
<div class="org" style="left:6px;top:429px;width:32px;height:32px"></div>
<div class="btn" style="left:40px;top:429px;width:31px;height:32px"></div>
<div class="btn" style="left:74px;top:429px;width:31px;height:32px"></div>
<svg class="a" style="left:0;top:365px" width="110" height="100" viewBox="0 365 110 100">
 <g id="rb">
 <circle cx="21.7" cy="386.7" r="7.6" fill="none" stroke="#d81c1c" stroke-width="2.6"/>
 <path d="M16.5 392 L27 381.5" stroke="#d81c1c" stroke-width="2.6"/>
 <use href="#grid" x="40" y="371" width="30" height="30"/>
 <path d="M50 383 L56 375 L66 375 L66 384 L60 386 Z" fill="#fff" stroke="#202020" stroke-width="0.8"/>
 <path d="M52 380 L58 376 M54 382 L60 378" stroke="#404040" stroke-width="0.6"/>
 <path d="M66 374 L69 374 L69 385 L66 384 Z" fill="#8a1020"/>
 <use href="#grid" x="74" y="371" width="30" height="30"/>
 <path d="M94 382 L99 377 L96 377 L101 372 M95 385 L101 380 L98 380 L103 375" fill="none" stroke="#101010" stroke-width="1.2"/>
 <path d="M93 383 L98 378 L95 378 L100 373" fill="none" stroke="#f0e020" stroke-width="1"/>
 </g>
 <use href="#rb" y="58"/>
</svg>

<!-- tolerances -->
<div class="t" style="left:-2px;top:481px;font-size:11px">G0</div>
<div class="inp" style="left:17px;top:475px;width:41px;height:19px;padding-left:3px">0.025</div>
<div class="t" style="left:62px;top:481px;font-size:11px">G1</div>
<div class="inp" style="left:82px;top:475px;width:41px;height:19px;padding-left:3px">0.5</div>
<div class="sep" style="left:0;top:499px;width:248px"></div>
<div class="t" style="left:-3px;top:507px">相交公差</div>
<div class="inp" style="left:50px;top:504px;width:62px;height:19px;text-align:right;padding-right:3px">0.0254</div>
<div class="sep" style="left:0;top:531px;width:249px"></div>
<!-- ICAX logo -->
<svg class="a" style="left:0;top:510px" width="130" height="50" viewBox="0 510 130 50">
 <g fill="none" stroke="#2c96cc" stroke-width="3.2">
 <path d="M11.5 543 C12.5 532 19 524 31 520.5"/>
 <path d="M54 519.5 C42 522 34 530 32.5 541.8 L55 541.8"/>
 <path d="M62.8 543.4 C63 532 71 524 82.6 520.4 L83.5 543.4 M61.4 525 C69 529 77 536 82.6 543.4"/>
 <path d="M91.7 543.4 C92 532 101 524 116.5 520 M95.4 520 C108 522 118 531 119.3 543.4"/>
 </g>
 <circle cx="38.9" cy="516.7" r="3" fill="#e87828"/>
 <rect x="8" y="546.5" width="115" height="7.7" fill="#2a90c8"/>
 <rect x="8" y="552.5" width="115" height="1.7" fill="#1a70a8"/>
 <text x="66" y="553" text-anchor="middle" font-family="Liberation Sans" font-weight="bold" font-style="italic" font-size="7.5" fill="#fff" letter-spacing="1.4">WWW.ICAX.CN</text>
</svg>
<div class="btn" style="left:129px;top:536px;width:53px;height:22px;border-color:#9aa4b0;background:linear-gradient(#f6f8fb,#dde3eb)"></div>
<div class="btn" style="left:188px;top:536px;width:53px;height:22px;border-color:#9aa4b0;background:linear-gradient(#f6f8fb,#dde3eb)"></div>
<div class="t" style="left:143px;top:541px;font-weight:bold;color:#202020">确定</div>
<div class="t" style="left:202px;top:541px;font-weight:bold;color:#202020">取消</div>
</div>
<div class="a" style="left:441px;top:-1px;width:187px;height:108px;background:#eef1f5;border:1px solid #98a4b4;border-top:none"></div>
<div class="a" style="left:444px;top:2px;width:182px;height:103px;background:linear-gradient(#d5dde6,#e4e9ef 40%,#eef1f5)"></div>
<div class="a" style="left:446px;top:3px;width:178px;height:18px;background:linear-gradient(#2d62a6,#1f5394)"></div>
<div class="t" style="position:absolute;left:448px;top:5px;font-size:13px;line-height:13px;font-weight:bold;color:#000;white-space:nowrap">选择意图</div>
<svg class="a" style="left:592px;top:8px" width="12" height="10"><path d="M2 3 L10 3 L6 8 Z" fill="#0c1a40"/></svg>
<div class="a" style="left:607px;top:4px;width:16px;height:16px;background:#fff;border:1px solid #c8d0da"></div>
<svg class="a" style="left:607px;top:4px" width="16" height="16"><path d="M4 4 L12 12 M12 4 L4 12" stroke="#000" stroke-width="2.6"/></svg>
<div class="a" style="left:449px;top:28px;width:119px;height:19px;background:#e8ecf1;border:1px solid #c3ccd6"></div>
<div class="a" style="left:551px;top:29px;width:16px;height:17px;background:linear-gradient(#eef1f5,#d6dce4);border-left:1px solid #d0d6de"></div>
<svg class="a" style="left:551px;top:29px" width="16" height="17"><rect x="4" y="2" width="8" height="13" rx="4" fill="none" stroke="#b8c0ca"/><path d="M6 7 L8 4 L10 7 Z M6 10 L8 13 L10 10 Z" fill="#b0b8c4"/></svg>
<div class="t" style="position:absolute;left:452px;top:31px;font-size:12px;line-height:12px;color:#a8b0bc;white-space:nowrap">相切面</div>
<div class="cmb" style="left:449px;top:53px;width:119px;height:19px"></div>
<svg class="a" style="left:551px;top:54px" width="16" height="17"><use href="#spin" x="0" y="0" width="16" height="17" preserveAspectRatio="none"/></svg>
<div class="t" style="position:absolute;left:452px;top:56px;font-size:12px;line-height:12px;color:#000;white-space:nowrap">单个曲线</div>
<div class="a" style="left:574px;top:51px;width:1px;height:23px;background:#c4ccd6"></div>
<div class="a" style="left:578px;top:52px;width:22px;height:20px;border:1px solid #b8c0cc;border-radius:3px;background:linear-gradient(#fbe8ec,#ecdce4)"></div>
<div class="a" style="left:602px;top:52px;width:21px;height:20px;border:1px solid #d0d6de;border-radius:3px;background:#e8ecf1"></div>
<svg class="a" style="left:578px;top:52px" width="46" height="20"><path d="M5 6 L16 6 M8 3 L8 17 M13 3 L13 17" stroke="#c02030" stroke-width="1.2"/><path d="M13 8 L13 17" stroke="#302060" stroke-width="1.2"/><path d="M29 6 L40 6 M32 3 L32 17 M37 3 L37 17" stroke="#b8a0b0" stroke-width="1.1"/></svg>
<div class="a" style="left:448px;top:77px;width:176px;height:1px;background:#c8d0da"></div>
<div class="a" style="left:447px;top:82px;width:21px;height:20px;border:1px solid #a8b4c2;border-radius:3px;background:linear-gradient(#f4f6f9,#dfe5ec)"></div>
<svg class="a" style="left:447px;top:82px" width="21" height="20"><path d="M5 8 L10 8 L10 5 L16 10 L10 15 L10 12 L5 12 Z" fill="#5ac0e0" stroke="#10507a" stroke-width="1"/></svg>

</body></html>
